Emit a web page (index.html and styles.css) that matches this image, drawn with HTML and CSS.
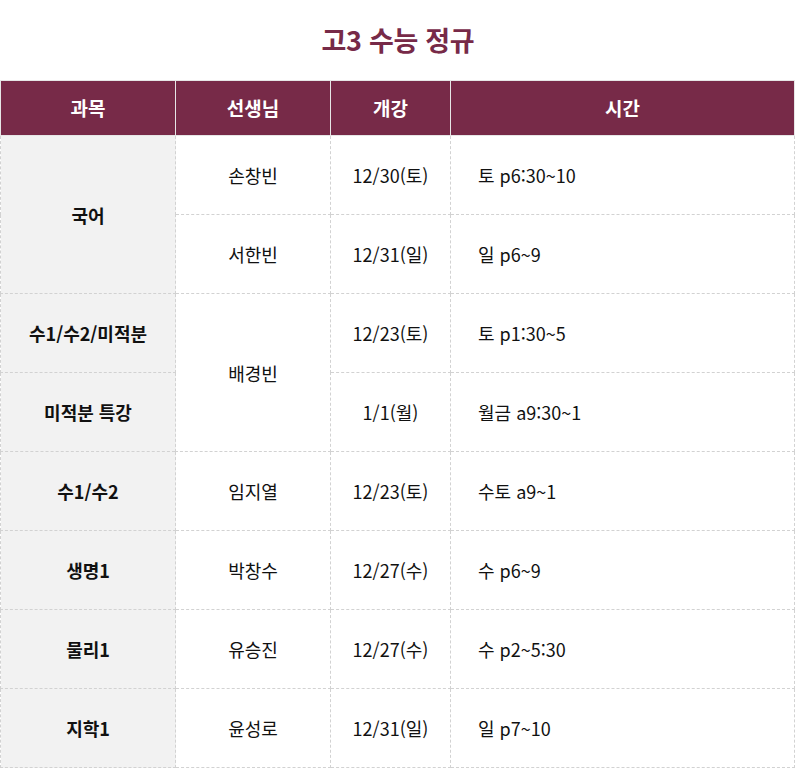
FILE: index.html
```html
<!DOCTYPE html>
<html lang="ko">
<head>
<meta charset="utf-8">
<link rel="stylesheet" href="styles.css">
</head>
<body>
<h1 class="title">고3 수능 정규</h1>
<table class="sched">
  <colgroup>
    <col class="c1"><col class="c2"><col class="c3"><col class="c4">
  </colgroup>
  <thead>
    <tr><th>과목</th><th>선생님</th><th>개강</th><th>시간</th></tr>
  </thead>
  <tbody>
    <tr><td class="subj" rowspan="2">국어</td><td>손창빈</td><td>12/30(토)</td><td class="time">토 p6:30~10</td></tr>
    <tr><td>서한빈</td><td>12/31(일)</td><td class="time">일 p6~9</td></tr>
    <tr><td class="subj">수1/수2/미적분</td><td rowspan="2">배경빈</td><td>12/23(토)</td><td class="time">토 p1:30~5</td></tr>
    <tr><td class="subj">미적분 특강</td><td>1/1(월)</td><td class="time">월금 a9:30~1</td></tr>
    <tr><td class="subj">수1/수2</td><td>임지열</td><td>12/23(토)</td><td class="time">수토 a9~1</td></tr>
    <tr><td class="subj">생명1</td><td>박창수</td><td>12/27(수)</td><td class="time">수 p6~9</td></tr>
    <tr><td class="subj">물리1</td><td>유승진</td><td>12/27(수)</td><td class="time">수 p2~5:30</td></tr>
    <tr><td class="subj">지학1</td><td>윤성로</td><td>12/31(일)</td><td class="time">일 p7~10</td></tr>
  </tbody>
</table>
</body>
</html>
```
FILE: styles.css
```css
html, body {
  margin: 0;
  padding: 0;
  background: #fff;
}
body {
  font-family: "Noto Sans CJK KR", "Noto Sans", sans-serif;
  color: #111;
}
.title {
  margin: 0;
  height: 80px;
  line-height: 80px;
  text-align: center;
  font-size: 27px;
  font-weight: 700;
  color: #772a48;
  letter-spacing: -0.3px;
}
.sched {
  border-collapse: collapse;
  table-layout: fixed;
  width: 795px;
}
.c1 { width: 175px; }
.c2 { width: 155px; }
.c3 { width: 120px; }
.sched th, .sched td {
  border: 1px dashed #d2d2d2;
  text-align: center;
  font-size: 18px;
  line-height: 22px;
  padding: 0;
}
.sched th {
  background: #772a48;
  color: #fff;
  font-size: 19px;
  font-weight: 700;
  height: 54px;
  border-color: #e6e6e6;
  border-style: solid;
}
.sched td {
  height: 78px;
  font-weight: 400;
}
.sched td.subj {
  background: #f2f2f2;
  font-weight: 700;
}
.sched td.time {
  text-align: left;
  padding-left: 27px;
}
```
